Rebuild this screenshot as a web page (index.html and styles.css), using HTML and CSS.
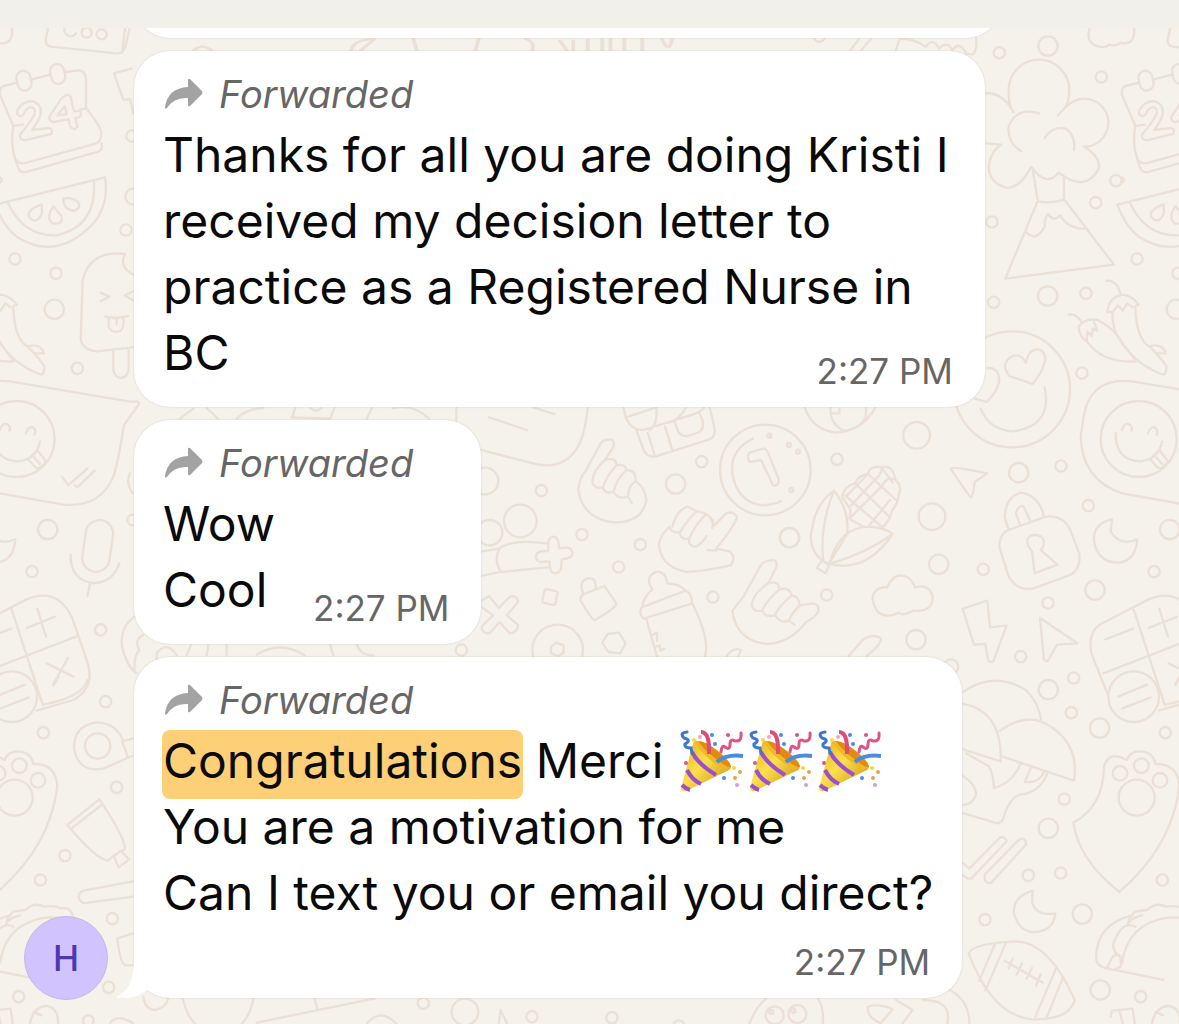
FILE: index.html
```html
<!DOCTYPE html>
<html lang="en">
<head>
  <meta charset="UTF-8">
  <meta name="viewport" content="width=device-width, initial-scale=1">
  <title>Chat</title>
  <link rel="stylesheet" href="styles.css">
</head>
<body>
  <!-- doodle wallpaper, repeats every 1122px -->
  <svg class="wallpaper" aria-hidden="true">
    <defs>
      <clipPath id="tile"><rect x="0" y="0" width="1122" height="4000"/></clipPath>

      <!-- drawings that cross the edge of the tile -->
      <g id="edge">
        <g transform="scale(.3333)">
          <!-- calendar -->
          <path d="M150 224L96 238M52 248L10 258Q-2 262 0 285L40 378Q30 430 45 475L55 505Q62 520 80 516L295 455Q310 450 304 430M48 480Q60 495 80 488L290 430Q304 422 304 400Q304 380 258 325V235Q256 210 235 211L196 216M40 378L70 374M258 325L240 330"/>
          <rect x="51" y="212" width="42" height="60" rx="21" transform="rotate(-12 72 242)"/>
          <rect x="152" y="192" width="42" height="60" rx="21" transform="rotate(-12 173 222)"/>
          <path d="M58 348Q46 342 54 328Q70 302 98 304Q126 312 122 342Q118 362 96 390L148 384Q160 388 154 402L80 420Q58 424 60 404Q92 366 104 342Q106 320 90 322Q76 326 72 342Q66 350 58 348M196 286Q214 280 214 300L222 334L238 332Q248 340 238 352L226 354L232 380Q222 396 210 378L206 358L160 366Q146 364 148 350L184 296ZM194 318L172 346L200 342Z"/>
          <!-- watermelon -->
          <path d="M-14 614L315 532Q330 630 260 690Q160 780 50 710Q10 680 -14 614M22 605Q70 710 170 706Q290 680 282 545"/>
          <path d="M125 613Q78 630 88 652Q110 676 126 640ZM160 619Q136 654 158 670Q192 676 184 648ZM190 596Q188 626 220 633Q246 626 234 606Q216 590 190 596"/>
          <circle cx="45" cy="777" r="17"/><circle cx="168" cy="820" r="17"/><circle cx="163" cy="928" r="29"/>
          <!-- speech bubble with smiley -->
          <path d="M395 1206L30 1144Q-95 1130 -115 1250L-124 1310Q-120 1440 0 1480L190 1514Q300 1524 340 1430Q352 1400 372 1275L415 1215Q424 1200 395 1206"/>
          <circle cx="50" cy="1317" r="114"/>
          <path d="M-19 1300Q-20 1380 52 1384Q110 1380 120 1325M0 1290Q5 1270 20 1272Q34 1280 28 1292M78 1300Q86 1278 98 1282Q110 1290 104 1304M84 1378L112 1350L138 1384Q120 1412 106 1402ZM102 1372L120 1392"/>
          <circle cx="143" cy="1589" r="29"/>
        </g>
        <!-- peppers and moon -->
        <g transform="translate(-336 300) scale(.3333)">
          <path d="M848 44Q872 40 886 66M960 -58Q996 -60 1004 -14M902 124Q880 110 878 80Q900 50 940 62Q990 90 1010 130L1050 184Q950 190 902 124M902 124L904 96L918 108L920 86L934 92L924 66M980 36L964 36Q970 -10 1010 -16Q1040 -12 1058 14L1048 18Q1050 120 1094 142Q1130 180 1142 200Q1140 230 1126 222Q1040 190 990 100Q976 60 980 36L996 16L1010 32L1024 10L1040 22M1094 138Q1130 130 1140 160L1110 160"/>
          <path d="M978 658Q920 670 924 724Q936 790 1000 788Q1050 780 1054 718Q1000 740 974 694Z"/>
        </g>
        <g transform="translate(0 680) scale(.3333)">
          <!-- calculator -->
          <path d="M-40 50L-92 -80Q-104 -150 -56 -172L80 -242Q170 -280 215 -190L260 -60Q290 20 220 60L110 92M35 -212L128 74M-56 -20L228 -130M-50 -122L34 -154M80 -156L165 -190M112 -214L138 -130M140 -50L220 -10M204 -66L160 12"/>
          <circle cx="35" cy="50" r="76"/><path d="M-12 50L75 14M0 86L86 52"/>
          <!-- paw -->
          <path d="M-8 636Q150 500 172 320Q168 250 100 252Q94 215 52 214Q24 214 14 240Q-40 210 -54 260Q-56 380 -146 428Q-130 540 -8 636"/>
          <circle cx="58" cy="257" r="22"/><circle cx="114" cy="301" r="22"/><circle cx="-6" cy="280" r="22"/><circle cx="44" cy="353" r="54"/>
          <!-- taco -->
          <path d="M18 732Q24 706 40 695Q70 690 76 690Q100 665 132 680Q165 675 182 685Q215 680 218 710M18 732Q30 712 60 706M-52 864Q-78 856 -78 830Q-74 730 32 706M-52 864L124 900M0 850Q16 730 140 712L218 714M-26 790Q0 720 40 740M-26 790Q-28 820 -4 830M-46 864L-28 830Q0 810 -4 860L-24 870"/>
          <circle cx="130" cy="158" r="17"/><circle cx="121" cy="600" r="17"/><circle cx="56" cy="950" r="17"/>
          <path d="M90 1030Q100 980 140 978Q176 984 174 1030M100 996L124 1006M-34 1010L-30 992L32 986L38 1030M-8 990L2 1030"/>
        </g>
      </g>

      <g id="doodles" clip-path="url(#tile)">
        <!-- left -->
        <g transform="scale(.3333)">
          <path d="M0 130Q42 132 36 85M145 80L137 120Q136 136 152 140L350 160Q370 162 376 140L390 80M376 80L366 158"/>
          <path d="M196 80a16 16 0 0 0 32 20"/><circle cx="260" cy="98" r="15"/><circle cx="305" cy="103" r="15"/>
          <circle cx="-3" cy="540" r="8"/><circle cx="396" cy="408" r="17"/><circle cx="400" cy="590" r="24"/><circle cx="378" cy="690" r="17"/>
          <path d="M395 206L342 220L370 300L390 297L400 340"/>
          <path d="M375 762Q270 750 248 840L242 1020Q250 1050 290 1054L420 1040M375 762Q355 800 400 824M302 878L328 890L302 904M400 874L374 887L398 900M316 950Q350 958 385 948M326 955V980Q334 1000 358 994Q374 988 370 953M350 955V972"/>
          <path d="M340 1054V1110Q345 1134 364 1134Q384 1130 386 1110V1050"/>
          <circle cx="232" cy="1105" r="17"/>
          <path d="M186 1430L204 1456L262 1406M224 1456L232 1462L284 1412"/>
          <rect x="252" y="1560" width="82" height="156" rx="41" transform="rotate(8 293 1638)"/>
          <path d="M212 1664Q210 1740 280 1750Q340 1746 358 1690M270 1752L262 1788"/>
          <circle cx="96" cy="1715" r="17"/><circle cx="302" cy="1890" r="17"/><circle cx="398" cy="1560" r="16"/>
        </g>
        <g transform="translate(0 680) scale(.3333)">
          <circle cx="317" cy="65" r="17"/><circle cx="350" cy="322" r="17"/><circle cx="195" cy="527" r="17"/><circle cx="337" cy="716" r="17"/><circle cx="326" cy="922" r="17"/><circle cx="265" cy="1022" r="16"/>
          <circle cx="293" cy="198" r="38"/><path d="M368 180Q345 125 286 128Q220 140 222 205Q235 280 310 266L396 228M366 184L384 232M366 184L400 175"/>
          <path d="M298 358L202 435Q290 540 325 542L342 526L374 508Q380 480 298 358M214 446L308 372M342 530L362 512L388 538L356 562Z"/>
          <path d="M400 604L250 632Q226 642 242 664Q250 672 264 668L400 650M130 74Q250 50 262 0M160 16L176 -10"/>
          <path d="M352 775L400 760M352 775Q360 850 376 856H400M330 1030Q350 1000 400 1030"/>
        </g>
        <!-- middle -->
        <g transform="translate(393 380) scale(.3333)">
          <path d="M190 80V120M264 210L420 250Q520 275 560 190Q575 160 585 80M288 112L402 150M420 82L484 102M0 85Q60 70 108 116"/>
          <path d="M640 180Q666 172 662 200L636 240Q670 230 670 256Q698 250 700 270Q730 270 728 304Q755 320 760 360Q750 424 670 428Q570 420 556 330Q560 290 580 270L618 200Q626 180 640 180M636 240Q600 270 598 306Q604 328 630 322Q640 290 670 256M630 322Q636 344 662 336Q668 300 700 270M662 336Q676 360 706 350Q704 320 728 304M706 350L716 370"/>
          <path d="M1130 542Q1156 534 1150 562L1126 610Q1156 600 1160 628Q1190 620 1196 646Q1220 650 1220 676L1262 670Q1280 676 1276 694Q1270 710 1240 726Q1190 790 1120 792Q1030 782 1018 692L1050 652L1100 562Q1110 542 1130 542M1126 610Q1080 640 1076 676Q1084 698 1108 692Q1120 660 1160 628M1108 692Q1116 714 1146 706Q1156 680 1196 646M1146 706Q1164 732 1188 722Q1196 700 1220 676M1188 722L1204 734"/>
          <path d="M692 82Q700 150 750 150L880 110Q920 100 935 82M730 150L752 210Q762 232 786 230L950 178Q970 170 964 140L950 82M764 158L786 228M816 140L838 210M706 110L790 82M844 122L856 156Q870 174 890 166L920 156Q936 140 928 120L920 100M790 82Q796 130 770 150M880 82Q850 130 820 128"/>
          <circle cx="276" cy="303" r="40"/><circle cx="445" cy="332" r="17"/><circle cx="382" cy="423" r="49"/><circle cx="290" cy="458" r="38"/><circle cx="567" cy="464" r="17"/><circle cx="742" cy="494" r="17"/><circle cx="677" cy="561" r="17"/><circle cx="926" cy="245" r="17"/><circle cx="848" cy="312" r="29"/><circle cx="960" cy="651" r="17"/><circle cx="205" cy="810" r="17"/><circle cx="1190" cy="473" r="29"/>
          <path d="M264 515L320 505Q360 476 460 490M320 505Q300 540 324 576L464 562M264 588L324 576"/>
          <path d="M466 490Q466 470 482 470Q498 472 498 505L524 502Q540 508 538 522Q536 536 506 538L504 566Q500 580 484 580Q468 576 470 544L440 546Q426 540 430 524Q436 510 466 514Z"/>
          <path d="M264 664L288 648L318 684L350 650Q370 644 376 664L342 706L376 736Q372 760 350 760L320 726L290 760Q266 762 266 740L300 706L264 680"/>
          <rect x="451" y="630" width="40" height="42" rx="6" transform="rotate(12 471 651)"/>
          <path d="M572 642Q560 620 570 604Q584 588 604 600L610 628L634 618L670 670Q670 684 606 720Q596 720 562 660Q562 650 572 642M572 642L610 628"/>
          <circle cx="494" cy="810" r="76"/><path d="M474 800L490 788L512 796L512 818L494 828L474 820ZM644 762L678 758L698 790L682 820L646 816L628 788Z"/>
          <path d="M838 440Q850 390 884 380L912 394Q960 400 960 440L1000 400Q1020 392 1032 410Q1030 430 970 506L1010 514Q1030 530 1014 556Q930 574 880 576Q800 560 798 490Q806 460 830 440Q830 456 860 458Q890 410 912 394M860 458Q862 480 888 476Q910 430 936 406M888 476Q886 500 908 500Q930 490 940 468M960 420L958 444M944 510L970 512"/>
          <path d="M778 628Q758 600 778 582Q800 566 818 590Q820 600 824 610Q860 612 876 630M778 628Q752 650 748 680M746 682L878 632Q896 640 898 670L752 716Q736 700 746 682M760 716L792 830M898 670Q952 780 936 830M780 764L792 758V782M790 800L800 796L802 812L814 806"/>
          <circle cx="1117" cy="270" r="136"/><path d="M1080 176Q1010 210 1018 280Q1034 370 1110 376Q1150 372 1164 364M1070 246Q1060 228 1070 218L1110 206Q1120 204 1126 220L1158 300Q1156 320 1140 316L1104 240Z"/>
          <circle cx="1129" cy="167" r="6"/><circle cx="1188" cy="195" r="6"/><circle cx="1215" cy="215" r="6"/><circle cx="1195" cy="330" r="6"/>
          <path d="M1000 830Q1020 800 1044 810L1036 830"/>
        </g>
        <!-- cloud and volcano -->
        <g transform="translate(786 0) scale(.3333)">
          <circle cx="640" cy="158" r="17"/><circle cx="786" cy="138" r="29"/><circle cx="946" cy="231" r="17"/><circle cx="990" cy="542" r="17"/><circle cx="929" cy="608" r="17"/><circle cx="618" cy="666" r="17"/><circle cx="623" cy="907" r="17"/><circle cx="785" cy="888" r="29"/><circle cx="900" cy="880" r="17"/>
          <path d="M912 82Q896 130 940 140Q960 144 970 134Q990 140 1006 128Q1040 126 1042 84"/>
          <path d="M682 336Q665 310 668 270A91 91 0 0 1 850 270Q850 300 838 322L816 346M838 322Q870 290 912 298A72 72 0 0 1 894 440Q946 470 938 506Q900 580 818 518Q780 564 736 500Q700 570 660 562Q610 550 608 500Q616 450 646 434L598 430M598 280Q650 276 682 336M760 340Q690 320 668 380Q664 430 706 454M776 414Q800 376 840 386Q870 410 864 450"/>
          <path d="M740 510L756 604Q790 612 834 600V530M754 606L658 836L984 794L836 600M718 694Q750 730 776 680Q776 650 786 642Q804 668 822 646Q850 690 904 686"/>
          <path d="M330 150L340 118Q370 110 420 140Q440 110 460 146Q480 120 500 150Q520 120 540 160L560 164Q575 150 570 112M194 150L218 118M226 150L254 118M84 116Q98 136 116 116"/>
        </g>
        <g transform="translate(130 22) scale(.5555 .3333)">
          <path d="M115 84Q130 64 146 84M398 84Q405 50 440 52L416 84M510 50L516 84M628 50L622 84M712 50Q730 60 724 84M774 56L786 84M798 56V84M824 54V84M850 52V84M865 52V84M890 50V84M922 50V84M958 52Q970 100 976 52"/>
        </g>
        <!-- heart eyes, corn, lock -->
        <g transform="translate(786 300) scale(.3333)">
          <circle cx="678" cy="268" r="174"/>
          <path d="M740 252L670 228Q640 190 680 168Q704 160 720 188Q730 140 764 150Q800 174 740 252M604 204Q640 202 640 244Q630 280 602 306L566 296M584 326Q610 390 680 394Q800 380 776 262"/>
          <circle cx="888" cy="219" r="17"/><circle cx="392" cy="406" r="40"/><circle cx="153" cy="478" r="17"/><circle cx="698" cy="518" r="29"/><circle cx="825" cy="498" r="17"/><circle cx="907" cy="617" r="17"/><circle cx="438" cy="650" r="40"/><circle cx="458" cy="793" r="29"/><circle cx="592" cy="808" r="17"/><circle cx="122" cy="885" r="17"/><circle cx="10" cy="713" r="29"/><circle cx="390" cy="1019" r="29"/><circle cx="786" cy="909" r="17"/><circle cx="927" cy="870" r="29"/><circle cx="704" cy="1070" r="17"/>
          <path d="M56 322Q80 390 150 398Q230 392 268 322M134 322Q130 370 172 392Q220 390 240 350V322M134 340H160V326"/>
          <path d="M494 506Q500 498 604 520L566 546Q562 590 554 592Q536 570 494 506"/>
          <path d="M110 784Q60 740 80 680Q90 610 144 572Q190 630 184 700L130 790ZM144 572Q100 680 112 784M130 792Q160 680 250 680Q300 684 320 702Q240 820 130 792M130 792Q240 760 320 702M108 782L130 796L118 820L92 804Z"/>
          <path d="M168 590Q176 556 208 550Q216 526 246 522Q250 496 286 502Q320 492 328 538Q350 560 338 586Q336 610 318 632Q312 660 290 682M168 590L194 630L190 656L232 680M208 550L312 652M246 522L330 600M178 588L290 682M286 502L320 548M328 538Q300 530 290 556L190 656M286 502Q290 520 270 536L190 622M312 600L250 676M246 522L180 590"/>
          <path d="M668 690L656 650Q660 590 704 578Q760 586 774 650M690 640Q696 616 712 618L734 666M702 674L690 640M640 740Q640 700 668 690L780 650Q840 644 858 704L880 760Q886 810 850 826L740 866Q690 874 666 824Z"/>
          <path d="M738 754Q710 720 736 706Q774 700 774 732Q770 746 764 750L814 794L746 820Z"/>
          <path d="M304 862Q320 820 354 828Q380 836 386 862Q430 850 440 890Q440 938 382 932Q350 950 340 938Q300 958 274 934Q248 890 270 872Q282 860 304 862"/>
          <path d="M530 926L604 902L612 982L662 976L622 1084Q610 1090 606 1080L598 1032L564 1034ZM762 954L874 1030L814 1034L784 1084L774 1080ZM188 1068L230 1020Q260 1000 284 1014Q290 1030 242 1068"/>
        </g>
        <!-- mushrooms, moon, football -->
        <g transform="translate(786 640) scale(.3333)">
          <path d="M525 160Q620 90 720 150Q760 190 766 244M525 190Q650 210 644 364L525 326M642 272Q730 210 800 264Q880 320 864 422L650 350M704 370Q680 430 624 444Q620 380 600 374L540 340M736 382L716 426Q760 430 774 396M784 400Q760 460 700 464Q670 474 650 540Q640 556 620 546L525 518M525 404Q570 430 570 464Q560 496 525 496"/>
          <circle cx="495" cy="80" r="22"/><circle cx="787" cy="149" r="29"/><circle cx="863" cy="114" r="17"/><circle cx="856" cy="218" r="17"/><circle cx="941" cy="264" r="29"/><circle cx="835" cy="477" r="17"/><circle cx="787" cy="565" r="29"/><circle cx="727" cy="706" r="17"/><circle cx="824" cy="699" r="17"/><circle cx="597" cy="839" r="17"/><circle cx="889" cy="822" r="29"/><circle cx="943" cy="1050" r="29"/>
          <path d="M525 664L550 686L640 594Q656 586 662 604L556 716H546L525 702M596 704L700 598Q720 590 720 614L616 728Q594 734 596 704M740 752Q680 770 684 820Q700 880 750 876Q804 870 808 820Q750 830 738 786Z"/>
          <path d="M548 940Q560 910 690 904Q790 906 866 1080Q850 1140 740 1138Q620 1130 548 940M628 910L580 1022M660 908L598 1052M810 986L748 1130M832 1010L780 1138M656 962L770 1028M680 956L668 984M708 970L692 1004M738 984L722 1016M764 1002L750 1038"/>
          <path d="M96 1076Q116 1110 110 1152M246 1100Q280 1090 320 1108L284 1150Q240 1130 246 1100M330 1080L380 1110L350 1150M410 1080Q500 1080 484 1150M490 1050Q550 1080 550 1150"/>
          <circle cx="34" cy="1122" r="27"/><circle cx="-34" cy="1126" r="27"/><path d="M-110 1152Q-90 1100 -60 1076"/><circle cx="22" cy="1112" r="6"/><circle cx="-44" cy="1116" r="6"/>
        </g>
        <g transform="translate(130 990) scale(.3333)">
          <path d="M40 20Q45 60 76 60Q110 52 114 25M158 25Q170 80 200 106M370 25Q364 70 332 106M380 98L735 25M554 25L562 58M710 102Q750 50 800 102M1106 102L1112 60L1132 102"/>
          <circle cx="880" cy="40" r="17"/><circle cx="1005" cy="66" r="40"/><circle cx="1206" cy="80" r="17"/><circle cx="1446" cy="83" r="17"/><circle cx="1647" cy="108" r="17"/>
        </g>
        <!-- tops and bottoms of drawings between the bubbles -->
        <g transform="translate(0 340) scale(.3333)">
          <path d="M540 236L580 206M620 204L654 236M710 236Q740 206 790 204M886 204L876 232L990 236L1004 204M930 204Q948 220 964 204M1100 236L1116 204M390 400Q376 430 398 460M470 980V940Q500 900 530 946M560 946L574 912M620 946L626 912M680 946V912M770 944Q840 900 914 946M990 912L1000 946M1070 912Q1080 946 1120 946M404 830Q360 860 366 920Q380 980 410 1000M430 885Q400 900 418 930Q400 950 404 994"/>
        </g>
      </g>

      <linearGradient id="cone" x1="0" y1="0" x2="1" y2="1">
        <stop offset="0" stop-color="#e9a91c"/><stop offset=".45" stop-color="#fbe04c"/><stop offset="1" stop-color="#c98515"/>
      </linearGradient>
      <symbol id="party" viewBox="0 0 64 64">
        <path fill="url(#cone)" d="M18 11Q14 9 13 14L1 58Q1 62 6 61L49 40Q53 37 48 33Z"/>
        <path fill="#e08b12" d="M18 11Q24 10 38 21Q52 33 51 37Q46 38 32 26Q18 14 18 11Z"/>
        <path fill="#f0b822" d="M15 12Q22 26 45 40L49 38Q28 26 18 11Z"/>
        <path fill="none" stroke="#9b4fd0" stroke-width="4" d="M12 22Q18 34 36 45M7 40Q12 50 21 54M2 55Q6 59 10 60"/>
        <path fill="none" stroke="#e04a78" stroke-width="4" d="M21 2Q30 2 29 24"/>
        <path fill="none" stroke="#4b8be0" stroke-width="4" d="M37 32Q46 24 63 26"/>
        <path fill="none" stroke="#dd5580" stroke-width="3" stroke-linecap="round" d="M41 22Q42 14 45 17Q50 21 50 14Q50 8 55 11Q62 12 61 3"/>
        <path fill="none" stroke="#3b76cf" stroke-width="3" stroke-linecap="round" d="M7 2Q-1 3 4 8Q12 10 5 14Q4 18 11 18L12 23"/>
        <g fill="#4b8be0"><circle cx="32" cy="5" r="2"/><circle cx="35" cy="14" r="2"/><circle cx="44" cy="48" r="2"/></g>
        <g fill="#d9567f"><circle cx="48" cy="5" r="2"/><circle cx="6" cy="33" r="2"/></g>
        <g fill="#e6a24d"><circle cx="60" cy="42" r="2"/><circle cx="55" cy="48" r="2"/></g>
        <circle cx="14" cy="10" r="2" fill="#f3d94c"/><circle cx="54" cy="38" r="2" fill="#f0d836"/>
        <circle cx="20" cy="7" r="2" fill="#f2a3bd"/><circle cx="57" cy="55" r="2" fill="#d69ad6"/>
      </symbol>
      <symbol id="forward" viewBox="0 0 40 32">
        <path d="M2 29Q5 10 25 9V2Q25 0 27 1L39 13Q40 15 39 16L27 28Q25 29 25 27V20Q11 19 4 30Q2 32 2 29Z"/>
      </symbol>
    </defs>
    <use href="#doodles"/>
    <use href="#doodles" x="1122"/>
    <use href="#edge"/>
    <use href="#edge" x="1122"/>
  </svg>

  <header class="topbar"></header>

  <main class="chat">
    <div class="bubble bubble-previous"></div>

    <article class="bubble">
      <p class="forwarded"><svg aria-hidden="true"><use href="#forward"/></svg><em>Forwarded</em></p>
      <div class="body body-wrap">
        <span>Thanks for all you are doing Kristi I received my decision letter to practice as a Registered Nurse in BC</span>
        <time>2:27 PM</time>
      </div>
    </article>

    <article class="bubble">
      <p class="forwarded"><svg aria-hidden="true"><use href="#forward"/></svg><em>Forwarded</em></p>
      <div class="body body-inline">
        <p>Wow<br>Cool</p>
        <time>2:27 PM</time>
      </div>
    </article>

    <div class="row">
      <div class="avatar">H</div>
      <article class="bubble">
        <svg class="tail" viewBox="0 0 40 36" aria-hidden="true"><path d="M19 0Q18 28 2 34Q0 36 4 36Q20 38 32 28L40 0Z"/></svg>
        <p class="forwarded"><svg aria-hidden="true"><use href="#forward"/></svg><em>Forwarded</em></p>
        <div class="body body-stacked">
          <p><mark>Congratulations</mark> Merci <span class="emojis" role="img" aria-label="🎉🎉🎉"><svg><use href="#party"/></svg><svg><use href="#party"/></svg><svg><use href="#party"/></svg></span><br>You are a motivation for me<br>Can I text you or email you direct?</p>
          <time>2:27 PM</time>
        </div>
      </article>
    </div>
  </main>
</body>
</html>
```
FILE: styles.css
```css
* {
  box-sizing: border-box;
}

body {
  margin: 0;
  position: relative;
  min-height: 100vh;
  background-color: #f5f2eb;
  color: #0a0a0a;
  font-family: Inter, Roboto, sans-serif;
  overflow-x: hidden;
}

p {
  margin: 0;
}

/* Doodles behind the messages */
.wallpaper {
  position: absolute;
  top: 0;
  left: 0;
  width: 100%;
  height: 100%;
  z-index: -1;
  fill: none;
  stroke: #ebe0d5;
  stroke-width: 7;
  stroke-linecap: round;
  stroke-linejoin: round;
}

.topbar {
  position: relative;
  z-index: 1;
  height: 28px;
  background-color: #f2f0eb;
}

.chat {
  display: flex;
  flex-direction: column;
  align-items: flex-start;
  gap: 13px;
  padding: 0 24px 24px 134px;
}

.bubble {
  position: relative;
  padding: 19px 29px 21px;
  max-width: 851px;
  background-color: white;
  border-radius: 36px;
  box-shadow: 0 0 2px rgba(0, 0, 0, 0.16);
}

/* Only the bottom edge shows under the top bar */
.bubble-previous {
  width: 100%;
  max-width: 868px;
  height: 80px;
  margin-top: -70px;
}

/* Forwarded label */
.forwarded {
  display: flex;
  align-items: center;
  gap: 16px;
  height: 52px;
  padding-bottom: 4px;
  color: #666;
  font-size: 38px;
  line-height: 48px;
}

.forwarded svg {
  width: 40px;
  height: 32px;
  fill: #a3a3a3;
  stroke: none;
}

.body {
  font-size: 48px;
  line-height: 66px;
}

time {
  margin-right: 3px;
  color: #666;
  font-size: 35px;
  line-height: 30px;
  white-space: nowrap;
}

/* Time sits at the end of the last line */
.body-wrap {
  display: flow-root;
}

.body-wrap time {
  float: right;
  margin-top: 36px;
}

.body-inline {
  display: flex;
  align-items: flex-end;
  gap: 38px;
}

.body-stacked {
  display: flex;
  flex-direction: column;
}

.body-stacked time {
  align-self: flex-end;
  margin-top: 21px;
}

mark {
  padding: 1px 1px 9px;
  margin: 0 -1px;
  border-radius: 8px;
  background-color: #fdd078;
  color: inherit;
}

.emojis {
  margin-left: 3px;
}

.emojis svg {
  width: 64px;
  height: 64px;
  margin: -8px 5px -8px 0;
  vertical-align: -8px;
  stroke: none;
}

/* Last message, with the sender next to it */
.row {
  display: flex;
  align-items: flex-end;
  gap: 26px;
  margin-left: -110px;
}

.avatar {
  flex-shrink: 0;
  width: 84px;
  height: 84px;
  margin-bottom: -2px;
  border: 1px solid #c5b8ec;
  border-radius: 50%;
  background-color: #d1c4fe;
  color: #4f38af;
  font-size: 35px;
  font-weight: 500;
  line-height: 82px;
  text-align: center;
}

.tail {
  position: absolute;
  left: -19px;
  bottom: 0;
  width: 40px;
  height: 36px;
  fill: white;
  stroke: none;
}
```
